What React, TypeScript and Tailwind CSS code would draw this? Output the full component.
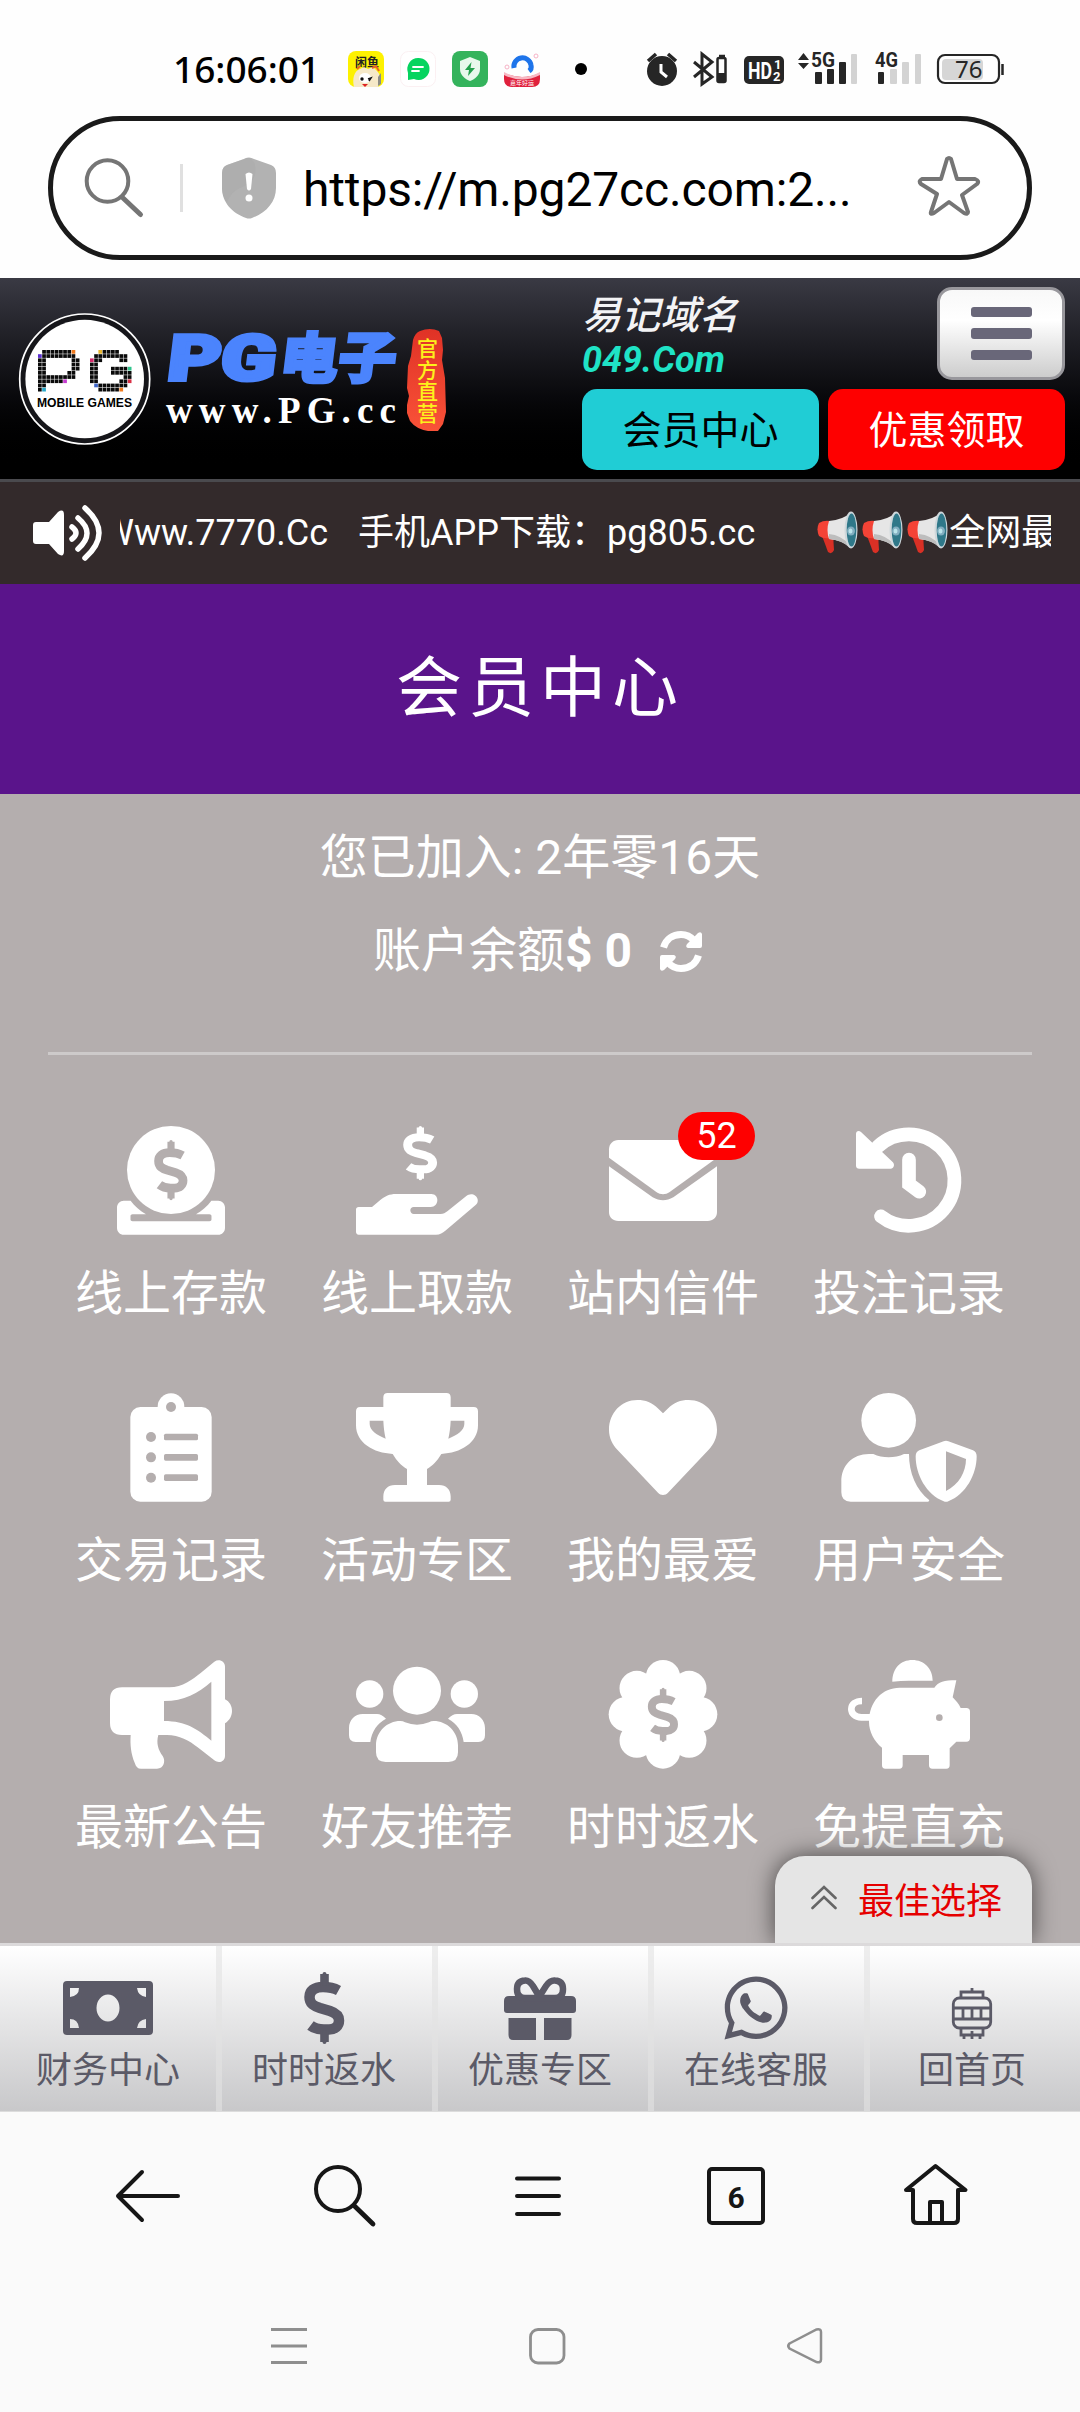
import type { ReactNode } from 'react';
import { FaWhatsapp } from 'react-icons/fa';

const DOLLAR =
  'M34.5 18.5C29 15.5 24 15 19 15C10 15 5.5 19 5.5 25C5.5 32 10 34 16 36L26 39C32 41 35 44 35 48.5C35 54 31 57.5 25 57.5H20C14 57.5 11 57 6.5 53.5';

function Dollar({ transform, color }: { transform?: string; color: string }) {
  return (
    <g transform={transform} fill="none" stroke={color}>
      <path d={DOLLAR} strokeWidth="10.5" />
      <path d="M20.5 2V14M20.5 58V70" strokeWidth="8.6" />
      <path d="M20.5 2V12M20.5 60V70" strokeWidth="4" strokeLinecap="round" />
    </g>
  );
}

const GREY = '#b4aeae';

/* every menu icon is drawn around x = 0 in a 408 x 326 box */
const icons: Record<string, ReactNode> = {
  deposit: (
    <>
      <circle cx="0" cy="132" r="132" />
      <path
        transform="translate(-162 0) scale(.6328 .637)"
        d="M480 352h-32.5c-19.6 26-44.6 47.7-73 64h63.8c5.3 0 9.6 3.6 9.6 8v16c0 4.4-4.3 8-9.6 8H73.6c-5.3 0-9.6-3.6-9.6-8v-16c0-4.4 4.3-8 9.6-8h63.8c-28.4-16.3-53.3-38-73-64H32c-17.7 0-32 14.3-32 32v96c0 17.7 14.3 32 32 32h448c17.7 0 32-14.3 32-32v-96c0-17.7-14.3-32-32-32z"
      />
      <Dollar transform="translate(-51 42) scale(2.49 2.51)" color={GREY} />
    </>
  ),
  withdraw: (
    <g transform="translate(-183 0)">
      <path d="M8 243H48L72 223C88 210 100 204 120 204H226C238 204 244 213 244 223C244 234 236 243 224 243H173C167 243 163 247 163 253C163 260 168 264 173 264H254C262 264 268 261 274 256L331 210C338 204 349 202 358 209C368 217 368 230 358 238L268 314C260 321 252 326 240 326H8C3 326 0 322 0 317V251C0 246 3 243 8 243Z" />
      <Dollar transform="translate(141 0) scale(2.54 2.26)" color="#fff" />
    </g>
  ),
  mail: (
    <g transform="translate(-162 42)">
      <path d="M28 0H296C312 0 324 12 324 28V53L182 156C169 165 155 165 142 156L0 53V28C0 12 12 0 28 0Z" />
      <path d="M0 79L131 172C152 184 172 184 193 172L324 79V216C324 232 312 243 296 243H28C12 243 0 232 0 216Z" />
    </g>
  ),
  history: (
    <>
      <path
        d="M-94 62A137 137 0 1 1 -84 271M0 101V174L31 197"
        fill="none"
        stroke="#fff"
        strokeWidth="41"
        strokeLinecap="round"
      />
      <path d="M-159 24C-159 14 -150 12 -144 18L-49 108C-41 116 -46 128 -55 128H-149C-155 128 -159 125 -159 119Z" />
    </>
  ),
  clipboard: (
    <>
      <rect x="-122" y="42" width="244" height="284" rx="30" />
      <circle cx="0" cy="41" r="40" />
      <g fill={GREY}>
        <circle cx="0" cy="42" r="15" />
        {[132, 193, 254].map((y) => (
          <g key={y}>
            <circle cx="-60" cy={y} r="15" />
            <rect x="-21" y={y - 10} width="102" height="20" rx="5" />
          </g>
        ))}
      </g>
    </>
  ),
  trophy: (
    <path
      fillRule="evenodd"
      d="M-88 0H88Q101 0 101 13V42H170Q183 42 183 55V97C183 150 130 180 73 183C60 205 47 218 30 228V276H66C88 276 101 290 101 310V320Q101 326 95 326H-95Q-101 326 -101 320V310C-101 290 -88 276 -66 276H-30V228C-47 218 -60 205 -73 183C-130 180 -183 150 -183 97V55Q-183 42 -170 42H-101V13Q-101 0 -88 0ZM101 83C100 104 98 120 94 137C120 127 142 112 142 93V83ZM-101 83C-100 104 -98 120 -94 137C-120 127 -142 112 -142 93V83Z"
    />
  ),
  heart: (
    <path d="M0 61L-14 47C-33 28 -52 21 -77 21C-125 21 -162 60 -162 110C-162 134 -152 154 -137 170L-15 299C-7 308 7 308 15 299L137 170C152 154 162 134 162 110C162 60 125 21 77 21C52 21 33 28 14 47Z" />
  ),
  security: (
    <>
      <circle cx="-61" cy="82" r="82" />
      <path d="M-203 266C-203 217 -170 183 -120 183H-107C-80 196 -42 196 -15 183H0C0 240 21 290 61 322L58 326H-175Q-203 326 -203 298Z" />
      <path
        fillRule="evenodd"
        d="M104 145Q111 142 118 145L192 172Q203 177 203 190C203 245 170 305 118 325Q111 328 104 325C52 305 20 245 20 190Q20 177 31 172ZM111 175V294C150 275 171 236 171 198Z"
      />
    </>
  ),
  bullhorn: (
    <path
      fillRule="evenodd"
      d="M-147 82H-5C35 82 65 58 88 40L130 5C145 -5 162 5 162 20V118C176 125 183 138 183 153C183 168 176 181 162 190V287C162 304 144 312 130 301L80 262C55 242 25 225 -12 225H-38C-45 250 -38 270 -25 288C-15 303 -22 326 -42 326H-90C-100 326 -105 320 -109 308C-120 282 -123 255 -121 225H-147Q-183 225 -183 189V118Q-183 82 -147 82ZM-21 123V183C45 183 80 208 121 242V65C80 100 40 123 -21 123Z"
    />
  ),
  friends: (
    <>
      <circle cx="0" cy="92" r="72" />
      <circle cx="-142" cy="102" r="41" />
      <circle cx="142" cy="102" r="41" />
      <path d="M-123 256C-123 215 -90 183 -50 183Q-42 183 -36 187Q0 201 36 187Q42 183 50 183C90 183 123 215 123 256V277Q123 306 94 306H-94Q-123 306 -123 277Z" />
      <path d="M-204 204C-204 180 -186 162 -163 162H-120Q-106 162 -93 176C-120 190 -136 215 -140 246H-184Q-204 246 -204 226Z" />
      <path d="M204 204C204 180 186 162 163 162H120Q106 162 93 176C120 190 136 215 140 246H184Q204 246 204 226Z" />
    </>
  ),
  rebate: (
    <>
      <circle cx="0" cy="163" r="122" />
      {[0, 45, 90, 135, 180, 225, 270, 315].map((deg) => (
        <circle key={deg} cx="0" cy="52" r="52" transform={`rotate(${deg} 0 163)`} />
      ))}
      <Dollar transform="translate(-46 83) scale(2.26)" color={GREY} />
    </>
  ),
  piggy: (
    <>
      <path d="M-50 65C-50 25 -25 0 10 0C45 0 71 25 71 62H0Q-25 62 -50 65Z" />
      <path d="M-28 83H76C88 66 105 61 142 61L131 112C140 122 150 132 155 144H172Q183 144 183 155V234Q183 245 172 245H142L122 265V316Q122 326 112 326H70Q60 326 60 316V285H-19V316Q-19 326 -29 326H-71Q-81 326 -81 316V263C-105 243 -120 215 -120 185C-120 125 -80 83 -28 83Z" />
      <path
        d="M-115 172H-143C-162 172 -173 160 -173 147C-173 133 -160 123 -141 123"
        fill="none"
        stroke="#fff"
        strokeWidth="20"
      />
      <circle cx="91" cy="173" r="10" fill={GREY} />
    </>
  ),
};

type MenuItem = { icon: string; label: string; badge?: number };

const menu: MenuItem[] = [
  { icon: 'deposit', label: '线上存款' },
  { icon: 'withdraw', label: '线上取款' },
  { icon: 'mail', label: '站内信件', badge: 52 },
  { icon: 'history', label: '投注记录' },
  { icon: 'clipboard', label: '交易记录' },
  { icon: 'trophy', label: '活动专区' },
  { icon: 'heart', label: '我的最爱' },
  { icon: 'security', label: '用户安全' },
  { icon: 'bullhorn', label: '最新公告' },
  { icon: 'friends', label: '好友推荐' },
  { icon: 'rebate', label: '时时返水' },
  { icon: 'piggy', label: '免提直充' },
];

function StatusBar() {
  return (
    <div className="flex h-[116px] items-start pl-[173px] pt-[51px] text-black">
      <span className="-mt-px w-[175px] font-['Noto_Sans'] text-[37px] leading-[37px] font-medium">
        16:06:01
      </span>
      <div className="flex gap-4">
        <svg width="36" height="36" viewBox="0 0 36 36">
          <rect width="36" height="36" rx="8" fill="#fdf100" />
          <text x="7" y="16" fontSize="12" fontWeight="700" fill="#222" fontFamily="Noto Sans CJK SC">
            闲鱼
          </text>
          <path d="M6 36C4 28 6 20 12 18L16 16L20 18L25 16L28 19C33 23 33 30 30 36Z" fill="#f6e9c8" />
          <path d="M24 17L28 15L31 20M9 18L12 15" stroke="#e8622a" strokeWidth="2" fill="none" />
          <ellipse cx="17" cy="27" rx="6" ry="5" fill="#fff" />
          <circle cx="14" cy="28" r="1.7" fill="#111" />
          <path d="M20 28L23 27L21 30" stroke="#111" strokeWidth="1.5" fill="none" />
          <path d="M14 33H20L17 36Z" fill="#d22" />
          <path d="M30 26L33 22V33L30 35Z" fill="#8d8d86" />
        </svg>
        <svg width="36" height="36" viewBox="0 0 36 36">
          <rect x=".5" y=".5" width="35" height="35" rx="8" fill="#fff" stroke="#fbf0f2" />
          <path d="M18 7A11 11 0 1 1 14 28L8 29L8 22A11 11 0 0 1 18 7Z" fill="#06d45f" />
          <path d="M13 16H23M12 20H19" stroke="#fff" strokeWidth="1.8" strokeLinecap="round" />
        </svg>
        <svg width="36" height="36" viewBox="0 0 36 36">
          <rect width="36" height="36" rx="8" fill="#34b35c" />
          <path d="M18 6L28 10V18C28 24 23 28 18 30C13 28 8 24 8 18V10Z" fill="#e8f8ec" />
          <path d="M19.5 11L13 19H17L16 25L23 17H18.5Z" fill="#23a04c" />
        </svg>
        <svg width="36" height="36" viewBox="0 0 36 36">
          <path d="M0 22Q18 30 36 22V28Q36 36 28 36H8Q0 36 0 28Z" fill="#e0203c" />
          <path d="M0 21Q18 31 36 21V24Q18 33 0 24Z" fill="#f7b9c4" />
          <path d="M10 17A8.500 8.500 0 0 1 27 14Q28 18 25 20" stroke="#1e74ea" strokeWidth="5" fill="none" />
          <circle cx="3" cy="16" r="2" fill="none" stroke="#f6b3c6" />
          <circle cx="32" cy="5" r="2" fill="none" stroke="#f6b3c6" />
          <text x="6" y="34" fontSize="6" fill="#fff" fontFamily="Noto Sans CJK SC">
            嘉年好运
          </text>
        </svg>
      </div>
      <div className="mt-3 ml-[35px] h-3 w-3 rounded-full bg-black" />
      <svg className="ml-[59px]" width="360" height="36" viewBox="646 51 360 36" fill="none" stroke="#262626">
        <circle cx="662" cy="71" r="15" fill="#262626" stroke="none" />
        <path d="M648 61L656 54M676 61L668 54" strokeWidth="3.5" />
        <path d="M661 64V72L667 77" stroke="#fff" strokeWidth="3" />
        <path d="M694 62L712 77L702 84V54L712 62L694 77" strokeWidth="3" />
        <rect x="717.5" y="58" width="8" height="24" rx="1.5" strokeWidth="2.5" />
        <path d="M719 56H725" strokeWidth="2.5" />
        <rect x="717" y="73" width="9" height="9" fill="#262626" stroke="none" />
        <rect x="744" y="56" width="40" height="28" rx="5" fill="#262626" stroke="none" />
        <g stroke="none" fontFamily="Roboto" fontWeight="700">
          <text x="748" y="79" fontSize="24" fill="#fff" textLength="24" lengthAdjust="spacingAndGlyphs">HD</text>
          <text x="774" y="69" fontSize="13" fill="#fff">1</text>
          <text x="773" y="81" fontSize="13" fill="#fff">2</text>
          <path d="M798 60L803.5 53L809 60ZM798 63L803.5 69L809 63Z" fill="#262626" />
          <text x="811" y="67" fontSize="21" fill="#262626" textLength="24" lengthAdjust="spacingAndGlyphs">5G</text>
          <text x="875" y="67" fontSize="21" fill="#262626" textLength="23" lengthAdjust="spacingAndGlyphs">4G</text>
        </g>
        <g stroke="none" fill="#262626">
          <rect x="815" y="72" width="7" height="12" rx="1" />
          <rect x="827" y="69" width="7" height="15" rx="1" />
          <rect x="839" y="62" width="7" height="22" rx="1" />
          <rect x="851" y="54" width="6" height="30" rx="1" fill="#d3d3d3" />
          <rect x="878" y="72" width="6" height="12" rx="1" />
          <rect x="890" y="69" width="7" height="15" rx="1" fill="#d3d3d3" />
          <rect x="902" y="62" width="7" height="22" rx="1" fill="#d3d3d3" />
          <rect x="915" y="54" width="6" height="30" rx="1" fill="#d3d3d3" />
        </g>
        <rect x="938" y="55" width="61" height="28" rx="7" strokeWidth="2.2" />
        <path d="M1002.5 64V75" strokeWidth="2.5" />
        <rect x="942" y="59" width="41" height="21" rx="4" fill="#d6d6d6" stroke="none" />
        <text x="955" y="78" fontSize="24" fill="#262626" stroke="none" fontFamily="Noto Sans">
          76
        </text>
      </svg>
    </div>
  );
}

function AddressBar() {
  return (
    <div className="mx-12 flex h-36 items-center rounded-full border-[5px] border-[#1a1a1a] bg-white">
      <svg className="ml-[31px]" width="62" height="62" viewBox="84 157 62 62" fill="none" stroke="#757575">
        <circle cx="107.5" cy="181" r="20.8" strokeWidth="4" />
        <path d="M123 198L140.5 214.5" strokeWidth="5" strokeLinecap="round" />
      </svg>
      <div className="ml-[34px] h-12 w-[3px] bg-[#e0e0e0]" />
      <svg className="ml-[39px]" width="54" height="62" viewBox="0 0 54 62">
        <path
          d="M22 2Q27 -1 32 2L49 8Q54 10 54 16V31C54 45 44 56 30 61Q27 62 24 61C10 56 0 45 0 31V16Q0 10 5 8Z"
          fill="#b2b2b2"
        />
        <path d="M5 45C8 38 12 33 20 30C31 26 36 18 32 5L27 1Q24 0 22 2L5 8Q0 10 0 16V31Q0 39 5 45Z" fill="#a9a9a9" opacity=".5" />
        <path d="M23.5 17Q27 14 30.5 17L29 32Q27 35 25 32Z" fill="#fff" />
        <circle cx="27" cy="41" r="3.5" fill="#fff" />
      </svg>
      <span className="mt-[3px] ml-[27px] w-[614px] font-[Roboto] text-[48px] leading-[56px] tracking-[-0.15px] text-black">
        https://m.pg27cc.com:2...
      </span>
      <svg className="-mt-1" width="64" height="62" viewBox="916 153 64 62" fill="none">
        <path
          d="M946 157Q948 155 950 157L956 177H974Q979 179 976 182L961 193L967 210Q967 213 963 211L948 200L933 211Q929 213 930 210L936 192L920 182Q917 179 921 177H940Z"
          stroke="#757575"
          strokeWidth="4"
          strokeLinejoin="round"
        />
      </svg>
    </div>
  );
}

/* '#' is a black cell, letters map to the coloured cells */
const pixelP = ['.#######O.', 'V########.', '##......##', '##......##', '##......##', '##.....##.', '#########.', '######M...', '##........', '#C........'];
const pixelG = ['..Y####...', '.########.', 'K##....##.', '##........', '##...####E', '##...#####', '##......##', '##.....##R', '.B#######.', '..#####O..'];
const cellColors: Record<string, string> = {
  '#': '#0a0a0a',
  O: '#f07a1e',
  V: '#5a2fd0',
  M: '#c63bd0',
  C: '#29a9c9',
  Y: '#e8b62c',
  K: '#d42a6a',
  E: '#2fc48c',
  R: '#d93045',
  B: '#3f66c8',
};

function PixelLetter({ rows, x, y }: { rows: string[]; x: number; y: number }) {
  return (
    <>
      {rows.map((row, r) =>
        row.split('').map((cell, c) =>
          cell === '.' ? null : (
            <rect
              key={`${r}-${c}`}
              x={x + c * 4.2}
              y={y + r * 4.2}
              width="3.7"
              height="3.7"
              fill={cellColors[cell]}
            />
          ),
        ),
      )}
    </>
  );
}

function Logo() {
  return (
    <svg width="432" height="134" viewBox="18 312 432 134">
      <defs>
        <linearGradient id="seal" x1="0" y1="0" x2="0" y2="1">
          <stop offset="0" stopColor="#e03226" />
          <stop offset="1" stopColor="#f95238" />
        </linearGradient>
      </defs>
      <circle cx="84.7" cy="379" r="65" fill="#16161a" stroke="#fff" strokeWidth="1.7" />
      <circle cx="84.7" cy="379" r="59.3" fill="#fff" />
      <PixelLetter rows={pixelP} x={38} y={350} />
      <PixelLetter rows={pixelG} x={90} y={350} />
      <text x="37" y="406.5" fontFamily="Liberation Sans" fontWeight="700" fontSize="12.5" textLength="95" lengthAdjust="spacingAndGlyphs">
        MOBILE GAMES
      </text>
      <g fill="#4b84fd" stroke="#4b84fd" strokeLinejoin="miter" transform="translate(167 380) skewX(-7)">
        <text x="-1" y="0" fontFamily="Roboto" fontWeight="900" fontSize="63" strokeWidth="4" textLength="108" lengthAdjust="spacingAndGlyphs">
          PG
        </text>
        <text x="111" y="-2" fontFamily="Noto Sans CJK SC" fontWeight="900" fontSize="55" strokeWidth="3" textLength="116" lengthAdjust="spacingAndGlyphs">
          电子
        </text>
      </g>
      <text x="166" y="423" fill="#fff" fontFamily="Liberation Serif" fontWeight="700" fontSize="37" textLength="230">
        www.PG.cc
      </text>
      <path
        d="M420 331Q430 327 439 331L442 338L443 350L442 360L445 378L446 412L443 424L438 431H428Q416 429 410 421L407 413V405L409 396L407 388L408 366L411 356L413 340Q415 333 420 331Z"
        fill="url(#seal)"
      />
      <g fill="#fdf11b" fontFamily="Noto Sans CJK SC" fontWeight="500" fontSize="21">
        <text x="417" y="356">官</text>
        <text x="417" y="378">方</text>
        <text x="417" y="399">直</text>
        <text x="417" y="421">营</text>
      </g>
    </svg>
  );
}

function Header() {
  return (
    <header className="flex h-[204px] items-start border-b-[3px] border-[#4a4a4e] bg-linear-to-b from-[#3a3a44] to-black to-98%">
      <div className="w-[582px] pt-[34px] pl-[18px]">
        <Logo />
      </div>
      <div className="flex w-[483px] flex-col pt-[9px]">
        <div className="flex h-[102px] justify-between">
          <div className="flex flex-col italic">
            <span className="mt-[7px] text-[39px] leading-[44px] font-medium text-[#f3f3f5]">易记域名</span>
            <span className="mt-px text-[36px] leading-[42px] font-bold text-[#1fe3c6]">049.Com</span>
          </div>
          <button className="flex h-[93px] w-32 flex-col items-center justify-center gap-[11px] rounded-[15px] border-[3px] border-[#98979c] bg-linear-to-b from-[#f8f8f8] from-0% via-white via-35% to-[#cdcdcd]">
            <span className="h-[10.5px] w-[61px] rounded-[3px] bg-[#696779]" />
            <span className="h-[10.5px] w-[61px] rounded-[3px] bg-[#696779]" />
            <span className="h-[10.5px] w-[61px] rounded-[3px] bg-[#696779]" />
          </button>
        </div>
        <div className="flex gap-[9px] text-[39px]">
          <button className="h-[81px] w-[237px] rounded-[15px] bg-[#20cdd5] pt-1 text-black">会员中心</button>
          <button className="h-[81px] w-[237px] rounded-[15px] bg-[#fe0000] pt-1 text-white">优惠领取</button>
        </div>
      </div>
    </header>
  );
}

function Loudspeaker() {
  return (
    <svg className="shrink-0" width="45" height="44" viewBox="0 0 45 44">
      <path d="M4 22L16 22L17 39Q15 44 11 41Z" fill="#d93025" />
      <path d="M2 12Q7 9 13 10V27Q6 28 2 25Q-1 18 2 12Z" fill="#f44336" />
      <path d="M12 10Q26 9 34 1V37Q25 29 12 28Q9 19 12 10Z" fill="#e6e6e6" />
      <path d="M12 23Q24 24 33 34V37Q25 29 12 28Z" fill="#bdbdbd" />
      <ellipse cx="34" cy="19" rx="6.5" ry="18.5" fill="#cfd8dc" />
      <ellipse cx="34.5" cy="19" rx="4.8" ry="16.5" fill="#2f7889" />
      <ellipse cx="34" cy="20" rx="4" ry="4.5" fill="#82aec0" />
      <ellipse cx="33.5" cy="20" rx="2" ry="2.5" fill="#b9e4ea" />
    </svg>
  );
}

function Notice() {
  return (
    <div className="flex h-[102px] items-center bg-[#332a2b] pl-[33px] text-white">
      <svg className="shrink-0" width="70" height="58" viewBox="33 503 70 58" fill="#fff">
        <path d="M36 521H49L58 511Q64 507 64 514V550Q64 557 58 553L49 543H36Q33 543 33 540V524Q33 521 36 521Z" />
        <path
          d="M72 526Q80 532 72 538M78 517Q96 532 78 548M85 507Q113 532 85 557"
          fill="none"
          stroke="#fff"
          strokeWidth="5.5"
          strokeLinecap="round"
        />
      </svg>
      <div className="ml-[17px] flex h-full w-[931px] items-center overflow-hidden text-[36px] whitespace-nowrap">
        <span className="-ml-[18px]">Www.7770.Cc</span>
        <span className="ml-[30px]">手机APP下载：pg805.cc</span>
        <div className="ml-[62px] flex">
          <Loudspeaker />
          <Loudspeaker />
          <Loudspeaker />
        </div>
        <span className="-ml-[3px]">全网最高</span>
      </div>
    </div>
  );
}

function Account() {
  return (
    <div className="mx-12 flex h-[261px] flex-col items-center border-b-[3px] border-[#cdcaca] pt-[33px] text-[48px] leading-[62px] text-white">
      <div>您已加入: 2年零16天</div>
      <div className="mt-[31px] mr-[5px] flex items-center">
        <span>
          账户余额<b className="font-bold">$ 0</b>
        </span>
        <svg className="ml-7" width="42" height="41" viewBox="0 0 42 41">
          <path
            d="M3.5 16.5C6 8 13 3.5 21 3.5C27 3.5 31 6 34 9.5M38.5 24.5C36 33 29 37.5 21 37.5C15 37.5 11 35 8 31.5"
            fill="none"
            stroke="#fff"
            strokeWidth="7"
          />
          <path d="M42 3V15Q42 17 40 17H28Q25 16 27 13L38 2Q41 0 42 3ZM0 38V26Q0 24 2 24H14Q17 25 15 28L4 39Q1 41 0 38Z" fill="#fff" />
        </svg>
      </div>
    </div>
  );
}

function MenuGrid() {
  return (
    <div className="mx-12 grid grid-cols-4 pt-[71px]">
      {menu.map((item) => (
        <div key={item.icon} className="relative flex h-[267px] flex-col items-center">
          <svg className="overflow-visible" width="136" height="108.7" viewBox="-204 0 408 326" fill="#fff">
            {icons[item.icon]}
          </svg>
          <span className="mt-[27px] text-[48px] leading-[64px] text-white">{item.label}</span>
          {item.badge && (
            <span className="absolute -top-[14px] left-[138px] flex h-12 w-[77px] items-center justify-center rounded-full bg-[#fe0000] text-[36px] text-white">
              {item.badge}
            </span>
          )}
        </div>
      ))}
    </div>
  );
}

const INK = '#5b5a67';

const tabs: { label: string; icon: ReactNode }[] = [
  {
    label: '财务中心',
    icon: (
      <svg width="90" height="54" viewBox="0 0 90 54">
        <path
          fillRule="evenodd"
          fill={INK}
          d="M4 0H86Q90 0 90 4V50Q90 54 86 54H4Q0 54 0 50V4Q0 0 4 0ZM7 7V16Q16 15 16 7ZM83 7H74Q75 15 83 16ZM7 47H16Q15 38 7 38ZM83 47V38Q75 39 74 47ZM45 13.5A11.5 13.5 0 1 0 45 40.5A11.5 13.5 0 1 0 45 13.5Z"
        />
      </svg>
    ),
  },
  {
    label: '时时返水',
    icon: (
      <svg width="41" height="72" viewBox="0 0 41 72">
        <Dollar color={INK} />
      </svg>
    ),
  },
  {
    label: '优惠专区',
    icon: (
      <svg width="72" height="63" viewBox="0 0 72 63" fill={INK}>
        <path d="M4.5 41H32V63H9Q4.5 63 4.5 58ZM40 41H67.5V58Q67.5 63 63 63H40Z" />
        <path d="M5 19H67Q72 19 72 24V33Q72 36 69 36H3Q0 36 0 33V24Q0 19 5 19Z" />
        <path
          d="M35 19L29 9Q25 3 21 3.5Q13 4 13 12Q13 21 21 21H51Q59 21 59 12Q59 4 51 3.5Q46 3 42 9L35 20"
          fill="none"
          stroke={INK}
          strokeWidth="6.5"
        />
      </svg>
    ),
  },
  { label: '在线客服', icon: <FaWhatsapp size={72} color={INK} /> },
  {
    label: '回首页',
    icon: (
      <svg className="mt-[9px]" width="42" height="52" viewBox="0 0 42 52" fill="none" stroke={INK} strokeWidth="2.8">
        <rect x="2.3" y="11" width="37.4" height="30" rx="6" />
        <path d="M10 10V5H32V10M21 1V5M10 42V48H32V42M13 48V52M21 44V52M29 48V52M2 21H40M2 32H40M12 21V32M21 21V32M30 21V32" />
      </svg>
    ),
  },
];

function TabBar() {
  return (
    <nav className="relative z-10 grid h-[169px] grid-cols-5 border-t-[3px] border-b border-t-[#dcdadb] border-b-[#dcdcdc] bg-linear-to-b from-white to-[#c8c8ca]">
      {tabs.map((tab, i) => (
        <div
          key={tab.label}
          className={[
            'flex flex-col items-center',
            i > 0 ? 'shadow-[inset_6px_0_0_rgba(226,226,226,0.6)]' : '',
          ].join(' ')}
        >
          <div className="flex h-[124px] w-full flex-none items-center justify-center">{tab.icon}</div>
          <span className="-mt-[21px] text-[36px] leading-[44px] text-[#5b5a67]">{tab.label}</span>
        </div>
      ))}
    </nav>
  );
}

function BrowserToolbar() {
  return (
    <div className="flex h-[168px] items-center justify-between pr-[108px] pl-[112px]">
      <svg width="72" height="72" viewBox="112 2160 72 72" fill="none" stroke="#161616" strokeWidth="4" strokeLinecap="round" strokeLinejoin="round">
        <path d="M178 2196H118M142 2172L118 2196L142 2220" />
      </svg>
      <svg width="72" height="72" viewBox="309 2160 72 72" fill="none" stroke="#161616" strokeWidth="4" strokeLinecap="round">
        <circle cx="338" cy="2189" r="22" />
        <path d="M354.5 2206L373 2224" strokeWidth="4.8" />
      </svg>
      <svg width="72" height="72" viewBox="506 2160 72 72" stroke="#161616" strokeWidth="4" strokeLinecap="round">
        <path d="M517 2178.5H559M517 2196H559M517 2214H559" />
      </svg>
      <div className="flex h-[72px] w-[72px] items-center pl-1">
        <div className="flex h-[58px] w-[58px] items-center justify-center rounded-[5px] border-4 border-[#161616] pt-[2px] text-[30px] font-bold text-[#161616]">
          6
        </div>
      </div>
      <svg width="72" height="72" viewBox="900 2160 72 72" fill="none" stroke="#161616" strokeWidth="4" strokeLinecap="round" strokeLinejoin="round">
        <path d="M913 2190H906L935.5 2166L965.5 2190H958V2219Q958 2223 954 2223H917Q913 2223 913 2219ZM930 2223V2202H942V2223" />
      </svg>
    </div>
  );
}

function SystemNav() {
  return (
    <div className="flex h-[132px] items-center justify-between pr-[251px] pl-[265px]">
      <svg width="48" height="48" viewBox="265 2322 48 48" stroke="#8e8e8e" strokeWidth="3">
        <path d="M271 2329.5H307M271 2346H307M271 2362.5H307" />
      </svg>
      <svg width="48" height="48" viewBox="523 2322 48 48" fill="none" stroke="#8e8e8e" strokeWidth="2.8">
        <rect x="530.5" y="2329.5" width="33.5" height="33.5" rx="7.5" />
      </svg>
      <svg width="48" height="48" viewBox="781 2322 48 48" fill="none" stroke="#8e8e8e" strokeWidth="2.5">
        <path d="M789.5 2343.5L816.5 2329.5Q821 2328.5 821 2332V2359.5Q821 2363 816.5 2362L789.5 2348.5Q787 2346 789.5 2343.5Z" />
      </svg>
    </div>
  );
}

export default function App() {
  return (
    <div className="h-[2412px] w-[1080px] overflow-hidden bg-[#fafafa] font-[Roboto,'Noto_Sans_CJK_SC',sans-serif]">
      <div className="h-[278px] bg-[#fefefe]">
        <StatusBar />
        <AddressBar />
      </div>
      <Header />
      <Notice />
      <h1 className="flex h-[210px] items-center justify-center bg-[#5a148b] pb-[2px] text-[66px] tracking-[6px] text-white">
        会员中心
      </h1>
      <main className="relative h-[1149px] overflow-hidden bg-[#b4aeae]">
        <Account />
        <MenuGrid />
        <div className="absolute right-12 bottom-0 flex h-[87px] w-[257px] items-center rounded-t-[30px] bg-[#e5e5e5] pl-9 shadow-[0_0_24px_rgba(0,0,0,0.6)]">
          <svg className="-mt-1" width="26" height="25" viewBox="0 0 26 25" fill="none" stroke="#666" strokeWidth="2.6" strokeLinecap="round">
            <path d="M1.5 13L13 2L24.5 13M1.5 23L13 12L24.5 23" />
          </svg>
          <span className="mt-[5px] ml-[21px] text-[36px] text-[#e60000]">最佳选择</span>
        </div>
      </main>
      <TabBar />
      <BrowserToolbar />
      <SystemNav />
    </div>
  );
}
